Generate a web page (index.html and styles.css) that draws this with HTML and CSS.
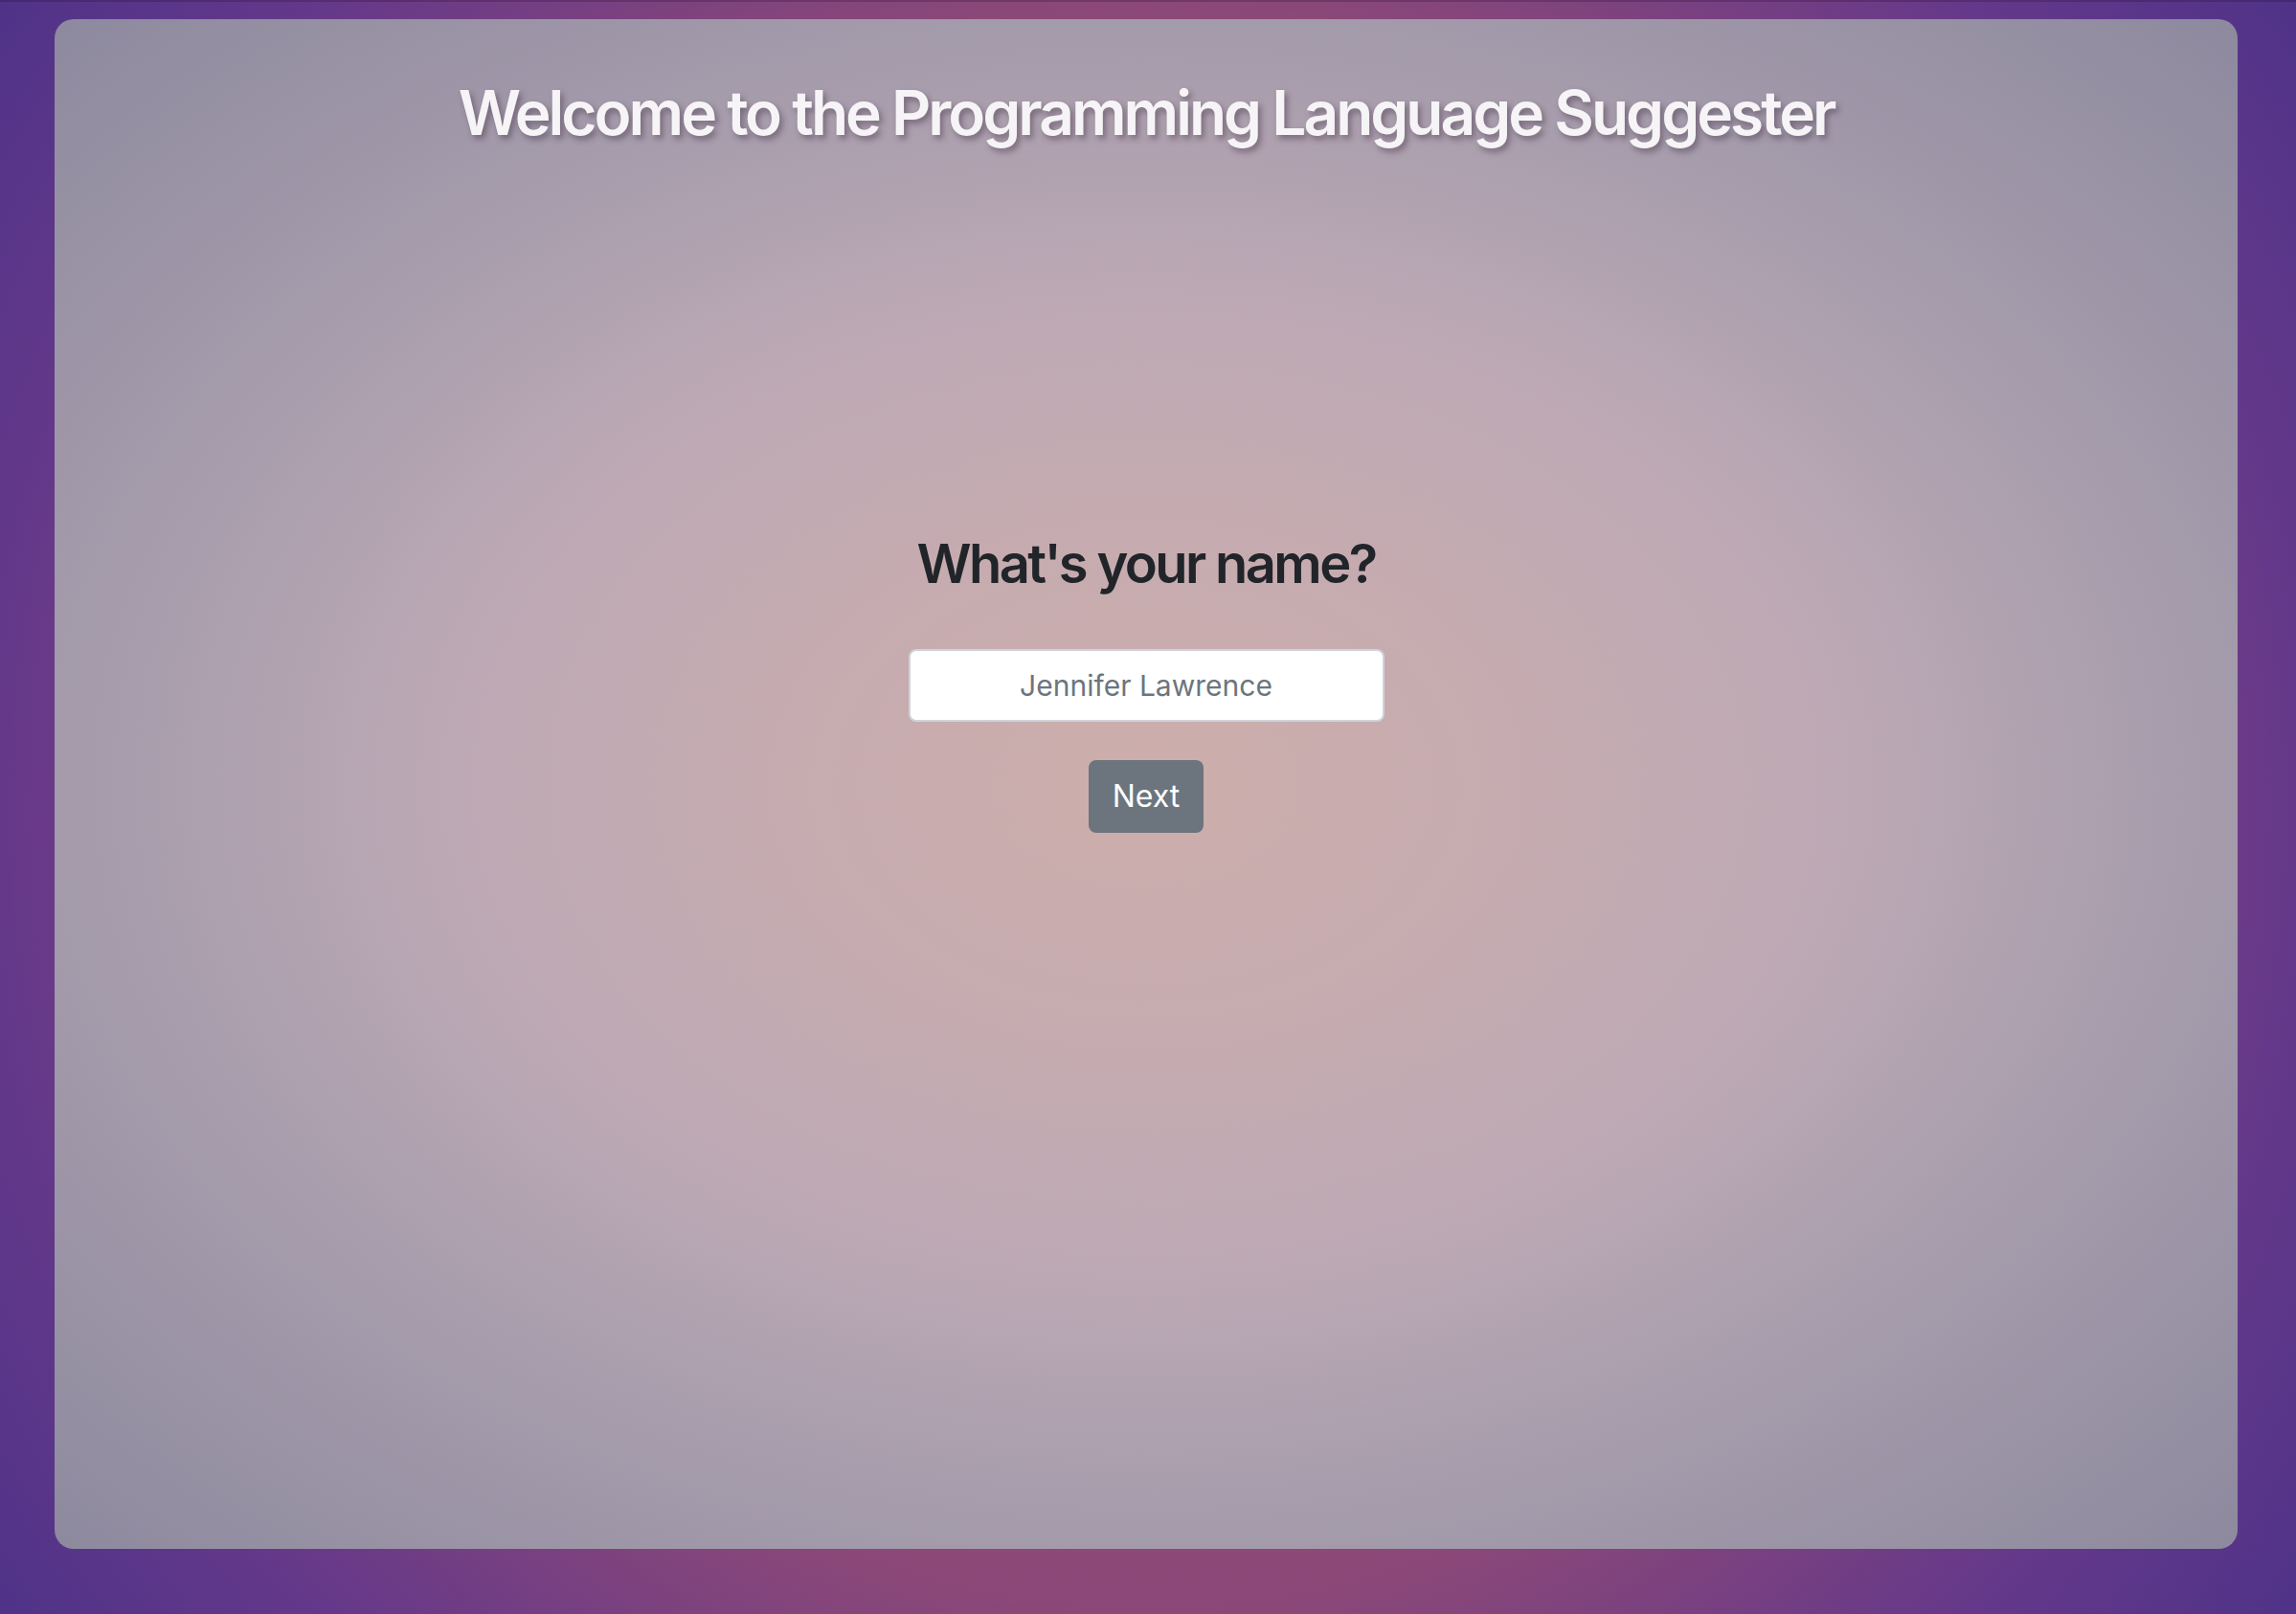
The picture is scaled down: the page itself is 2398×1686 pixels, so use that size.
FILE: index.html
```html
<!DOCTYPE html>
<html lang="en">
<head>
<meta charset="utf-8">
<title>Programming Language Suggester</title>
<link rel="stylesheet" href="styles.css">
</head>
<body>
<div class="topline"></div>
<main class="card">
  <h1 class="title">Welcome to the Programming Language Suggester</h1>
  <section class="step">
    <h2 class="question">What's your name?</h2>
    <input class="name-input" type="text" placeholder="Jennifer Lawrence">
    <button class="btn-next" type="button">Next</button>
  </section>
</main>
</body>
</html>
```
FILE: styles.css
```css
html, body {
  margin: 0;
  padding: 0;
}
html {
  overflow: hidden;
}
body {
  width: 2398px;
  height: 1686px;
  box-sizing: border-box;
  padding: 18px 61px 0 57px;
  font-family: Inter, "Noto Sans", "Liberation Sans", sans-serif;
  background: radial-gradient(circle farthest-corner at 50% 50%, #a4567a 0%, #8b4878 57%, #64388a 82%, #4f3388 100%);
  overflow: hidden;
}
.topline {
  height: 2px;
  margin: -18px -61px 18px -57px;
  background: rgba(40, 10, 40, 0.25);
}
.card {
  height: 1598px;
  border-radius: 20px;
  background: radial-gradient(ellipse farthest-corner at 50% 50%, #cdaeab 0%, #c5abb0 25%, #bda9b5 45%, #a49bab 70%, #8d899e 100%);
  display: flex;
  flex-direction: column;
  align-items: center;
  padding-top: 60px;
  box-sizing: border-box;
}
.title {
  margin: 0;
  font-size: 64px;
  line-height: 1.2;
  font-weight: 600;
  letter-spacing: -3px;
  color: #f6f4f6;
  text-shadow: 3px 4px 6px rgba(60, 40, 60, 0.45);
}
.step {
  margin-top: 399px;
  display: flex;
  flex-direction: column;
  align-items: center;
}
.question {
  margin: 0 0 55px;
  font-size: 56px;
  line-height: 1.2;
  font-weight: 600;
  letter-spacing: -2.6px;
  color: #212529;
}
.name-input {
  width: 497px;
  height: 76px;
  box-sizing: border-box;
  border: 2px solid #ced4da;
  border-radius: 8px;
  background: #fff;
  font-family: Inter, "Noto Sans", "Liberation Sans", sans-serif;
  font-size: 30px;
  text-align: center;
  color: #495057;
  padding: 0 24px;
  outline: none;
}
.name-input::placeholder {
  color: #6c757d;
  opacity: 1;
}
.btn-next {
  margin-top: 40px;
  width: 120px;
  height: 76px;
  border: none;
  border-radius: 8px;
  background: #6c757d;
  color: #fff;
  font-family: Inter, "Noto Sans", "Liberation Sans", sans-serif;
  font-size: 32px;
  padding: 0;
  cursor: pointer;
}
```
